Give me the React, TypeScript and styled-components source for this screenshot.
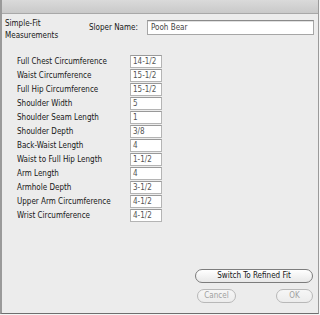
import React from 'react';
import styled, { createGlobalStyle } from 'styled-components';

const GlobalStyle = createGlobalStyle`
	html, body {
		margin: 0;
		padding: 0;
		background: #f4f4f4;
	}
	body {
		font-family: 'DejaVu Sans Condensed', 'DejaVu Sans', sans-serif;
	}
`;

const Window = styled.div`
	width: 316px;
	height: 313px;
	border-left: 2px solid #9a9a9a;
	border-right: 1px solid #9a9a9a;
	border-bottom: 1px solid #6e6e6e;
	background-color: #ececec;
	display: flex;
	flex-direction: column;
	box-sizing: content-box;
`;

const TitleBar = styled.div`
	height: 13px;
	flex: none;
	background: linear-gradient(#dadada, #c9c9c9);
	border-bottom: 1px solid #a8a8a8;
`;

const Body = styled.div`
	flex: 1;
	display: flex;
	flex-direction: column;
	padding: 3px 4px 0 3px;
	font-size: 8px;
	color: #161616;
`;

const Header = styled.div`
	display: flex;
	align-items: flex-start;
`;

const Heading = styled.div`
	width: 82px;
	flex: none;
	line-height: 12px;
	padding-top: 1px;
`;

const SloperRow = styled.div`
	display: flex;
	align-items: center;
	flex: 1;
	padding-top: 3px;
`;

const SloperLabel = styled.span`
	width: 58px;
	flex: none;
	padding-left: 2px;
`;

const NameInput = styled.div`
	flex: 1;
	height: 13px;
	background: #ffffff;
	border: 1px solid #a6a6a6;
	border-top-color: #8a8a8a;
	box-shadow: inset 0 1px 0 #e0e0e0;
	padding-left: 3px;
	line-height: 13px;
	color: #444;
`;

const Grid = styled.div`
	display: grid;
	grid-template-columns: 113px 32px;
	row-gap: 1px;
	margin-top: 13px;
	margin-left: 12px;
`;

const Label = styled.div`
	height: 13px;
	line-height: 13px;
	white-space: nowrap;
`;

const Field = styled.div`
	height: 11px;
	line-height: 11px;
	background: #ffffff;
	border: 1px solid #b4b4b4;
	border-top-color: #999;
	padding-left: 2px;
	color: #555;
`;

const Footer = styled.div`
	margin-top: auto;
	display: flex;
	flex-direction: column;
	align-items: flex-end;
	padding: 0 1px 10px 0;
	gap: 6px;
`;

const ButtonRow = styled.div`
	display: flex;
	justify-content: space-between;
	width: 116px;
`;

const Button = styled.div<{ $width: number; $disabled?: boolean }>`
	width: ${(p) => p.$width}px;
	height: 12px;
	line-height: 12px;
	border-radius: 7px;
	text-align: center;
	font-size: 8px;
	color: ${(p) => (p.$disabled ? '#a0a0a0' : '#161616')};
	border: 1px solid ${(p) => (p.$disabled ? '#b8b8b8' : '#7c7c7c')};
	background: ${(p) =>
		p.$disabled ? 'linear-gradient(#f6f6f6, #ececec)' : 'linear-gradient(#ffffff, #e8e8e8)'};
`;

const measurements: [string, string][] = [
	['Full Chest Circumference', '14-1/2'],
	['Waist Circumference', '15-1/2'],
	['Full Hip Circumference', '15-1/2'],
	['Shoulder Width', '5'],
	['Shoulder Seam Length', '1'],
	['Shoulder Depth', '3/8'],
	['Back-Waist Length', '4'],
	['Waist to Full Hip Length', '1-1/2'],
	['Arm Length', '4'],
	['Armhole Depth', '3-1/2'],
	['Upper Arm Circumference', '4-1/2'],
	['Wrist Circumference', '4-1/2']
];

const App: React.FC = () => {
	return (
		<>
			<GlobalStyle />
			<Window>
				<TitleBar />
				<Body>
					<Header>
						<Heading>
							Simple-Fit
							<br />
							Measurements
						</Heading>
						<SloperRow>
							<SloperLabel>Sloper Name:</SloperLabel>
							<NameInput>Pooh Bear</NameInput>
						</SloperRow>
					</Header>
					<Grid>
						{measurements.map(([name, value]) => (
							<React.Fragment key={name}>
								<Label>{name}</Label>
								<Field>{value}</Field>
							</React.Fragment>
						))}
					</Grid>
					<Footer>
						<Button $width={116}>Switch To Refined Fit</Button>
						<ButtonRow>
							<Button $width={37} $disabled>
								Cancel
							</Button>
							<Button $width={35} $disabled>
								OK
							</Button>
						</ButtonRow>
					</Footer>
				</Body>
			</Window>
		</>
	);
};

export default App;
